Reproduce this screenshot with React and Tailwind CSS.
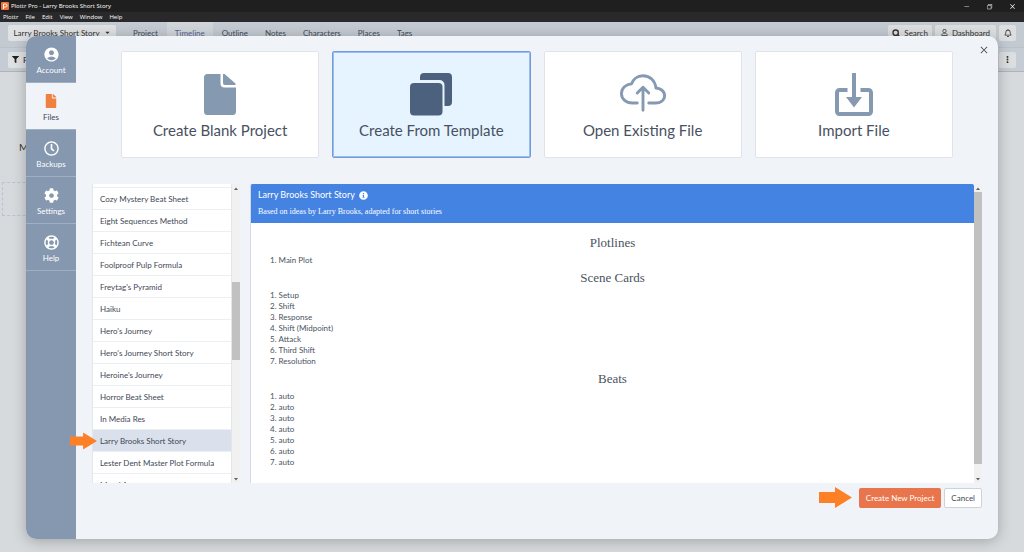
import React, { useState } from 'react';
import { FaFile, FaCog, FaRegClock, FaRegLifeRing, FaFilter, FaInfoCircle, FaRegBell, FaCaretDown, FaRegUser } from 'react-icons/fa';
import { MdAccountCircle } from 'react-icons/md';
import { IoCloudUploadOutline } from 'react-icons/io5';
import { FiSearch, FiMoreVertical } from 'react-icons/fi';
import { VscChromeMinimize, VscChromeRestore, VscChromeClose } from 'react-icons/vsc';

const MENUS = ['Plottr', 'File', 'Edit', 'View', 'Window', 'Help'];

const VIEWS = ['Project', 'Timeline', 'Outline', 'Notes', 'Characters', 'Places', 'Tags'];

const TABS = [
    { name: 'Account', icon: MdAccountCircle, size: 17 },
    { name: 'Files', icon: FaFile, size: 14 },
    { name: 'Backups', icon: FaRegClock, size: 15 },
    { name: 'Settings', icon: FaCog, size: 15 },
    { name: 'Help', icon: FaRegLifeRing, size: 15 },
];

const TEMPLATES = [
    'Cozy Mystery Beat Sheet',
    'Eight Sequences Method',
    'Fichtean Curve',
    'Foolproof Pulp Formula',
    "Freytag's Pyramid",
    'Haiku',
    "Hero's Journey",
    "Hero's Journey Short Story",
    "Heroine's Journey",
    'Horror Beat Sheet',
    'In Media Res',
    'Larry Brooks Short Story',
    'Lester Dent Master Plot Formula',
    'Moral Arc',
];

const SECTIONS = [
    { title: 'Plotlines', items: ['Main Plot'] },
    { title: 'Scene Cards', items: ['Setup', 'Shift', 'Response', 'Shift (Midpoint)', 'Attack', 'Third Shift', 'Resolution'] },
    { title: 'Beats', items: ['auto', 'auto', 'auto', 'auto', 'auto', 'auto', 'auto'] },
];

const BlankIcon = () => (
    <svg width="32" height="42" viewBox="0 0 32 42" fill="currentColor">
        <path d="M3.500 0H16.500v9.500a4 4 0 0 0 4 4H32V37.500a3.500 3.500 0 0 1-3.500 3.500h-25A3.500 3.500 0 0 1 0 37.500v-34A3.500 3.500 0 0 1 3.500 0z" />
        <path d="M19 0h1.500L31.500 9.500V11H21a2 2 0 0 1-2-2z" />
    </svg>
);

const TemplateIcon = () => (
    <svg width="42" height="43" viewBox="0 0 42 43" fill="currentColor">
        <path d="M10 7V4a4 4 0 0 1 4-4h24a4 4 0 0 1 4 4v25a4 4 0 0 1-4 4h-3.500V12a5 5 0 0 0-5-5z" />
        <rect x="0" y="10" width="32.500" height="32.500" rx="4" />
    </svg>
);

const ImportIcon = () => (
    <svg width="38" height="43" viewBox="0 0 38 43" fill="none" stroke="currentColor" strokeWidth="4">
        <path d="M12.500 17H4.500a2.500 2.500 0 0 0-2.500 2.500v19a2.500 2.500 0 0 0 2.500 2.500h29a2.500 2.500 0 0 0 2.500-2.500v-19a2.500 2.500 0 0 0-2.500-2.500h-8" />
        <path d="M19 0v25" />
        <path d="M11 24h16l-8 10.500z" fill="currentColor" stroke="none" />
    </svg>
);

const Arrow = ({ className }) => (
    <svg className={className} viewBox="0 0 33 21" fill="#fd7f26" aria-hidden="true">
        <path d="M0 5h16V0l17 10.500L16 21v-5H0z" />
    </svg>
);

const ACTIONS = [
    { label: 'Create Blank Project', icon: <BlankIcon /> },
    { label: 'Create From Template', icon: <TemplateIcon /> },
    { label: 'Open Existing File', icon: <IoCloudUploadOutline size={46} /> },
    { label: 'Import File', icon: <ImportIcon /> },
];

const Scrollbar = ({ before, thumb, after }) => (
    <div className="flex w-2 shrink-0 flex-col items-center bg-[#f1f1f1]" aria-hidden="true">
        <svg className="h-2 w-1 shrink-0" viewBox="0 0 4 8" fill="#606060"><path d="M0 6l2-2.500L4 6z" /></svg>
        <div className="flex w-full flex-1 flex-col">
            <div style={{ flexGrow: before }} />
            <div className="bg-[#c1c1c1]" style={{ flexGrow: thumb }} />
            <div style={{ flexGrow: after }} />
        </div>
        <svg className="h-2 w-1 shrink-0" viewBox="0 0 4 8" fill="#606060"><path d="M0 3l2 2.500L4 3z" /></svg>
    </div>
);

const TitleBar = () => (
    <header className="font-['Open_Sans',sans-serif] text-[6px] text-white">
        <div className="flex h-3 items-center bg-[#1f1f1f] pl-px leading-3">
            <svg className="mr-0.5 h-2 w-2" viewBox="0 0 8 8">
                <rect width="8" height="8" rx="1" fill="#f0703c" />
                <path d="M2.500 7V2h2a1.500 1.500 0 0 1 0 3h-2" fill="none" stroke="#fff" strokeWidth="1" />
            </svg>
            <span>Plottr Pro - Larry Brooks Short Story</span>
            <div className="ml-auto flex items-center gap-4 pr-2">
                <button type="button" aria-label="Minimize"><VscChromeMinimize size={7} /></button>
                <button type="button" aria-label="Restore"><VscChromeRestore size={7} /></button>
                <button type="button" aria-label="Close window"><VscChromeClose size={7} /></button>
            </div>
        </div>
        <nav className="flex h-[10px] items-center gap-[7px] bg-[#29292b] pl-[3px] leading-[10px]">
            {MENUS.map((menu) => <button key={menu} type="button">{menu}</button>)}
        </nav>
    </header>
);

const Workspace = () => (
    <>
        <div className="flex h-[26px] items-center border-b border-[#bac2cb] bg-[#c3cad2] px-2 pb-1 text-[8px] text-[#444c58]">
            <button type="button" className="mr-[9px] flex h-4 w-[108px] items-center justify-center gap-1 rounded-xs bg-[#dfe1e3] text-[#333]">
                Larry Brooks Short Story <FaCaretDown size={7} />
            </button>
            <nav className="flex h-full gap-px">
                {VIEWS.map((view) => (
                    <button key={view} type="button" className={view === 'Timeline' ? 'bg-[#d0d5da] px-2 text-[#5a6390]' : 'px-2'}>
                        {view}
                    </button>
                ))}
            </nav>
            <div className="ml-auto flex gap-[3px] text-[#333]">
                <button type="button" className="flex h-4 items-center gap-1 rounded-xs bg-[#dcdee0] px-1"><FiSearch size={8} strokeWidth={4} /> Search</button>
                <button type="button" className="flex h-4 items-center gap-1 rounded-xs bg-[#dcdee0] px-1.5"><FaRegUser size={7} /> Dashboard</button>
                <button type="button" aria-label="Notifications" className="flex h-4 w-[17px] items-center justify-center rounded-xs bg-[#dcdee0]"><FaRegBell size={8} /></button>
            </div>
        </div>
        <div className="flex h-6 items-center justify-between border-b border-[#aeb4bb] bg-[#c6ccd3] px-2 text-[8px] text-[#222]">
            <button type="button" className="flex h-4 items-center gap-1 rounded-xs bg-[#dfe1e3] px-1"><FaFilter size={7} /> Filter</button>
            <button type="button" aria-label="More" className="flex h-4 w-[17px] items-center justify-center rounded-xs bg-[#dcdee0]"><FiMoreVertical size={9} strokeWidth={3} /></button>
        </div>
        <main className="flex-1 bg-[#d7dadd] text-[10px] text-[#333]">
            <div className="mt-[66px] pl-[19px] leading-[18px]">Main Plot</div>
            <div className="mt-[26px] ml-0.5 h-[34px] w-20 border border-dashed border-[#b4c4d2]" />
        </main>
    </>
);

const TemplateDetails = ({ name }) => (
    <div className="flex min-w-0 flex-1">
        <section className="min-w-0 flex-1 overflow-hidden rounded-t-xs border-l border-[#d2dbe5] bg-white">
            <div className="h-[39px] bg-[#4583e3] px-[7px] pt-1 text-white">
                <h2 className="flex items-center gap-1 text-[9px] leading-[14px]">{name} <FaInfoCircle size={9} /></h2>
                <p className="mt-1 font-['Liberation_Serif',serif] text-[8px] leading-3">Based on ideas by Larry Brooks, adapted for short stories</p>
            </div>
            <div className="pt-3 text-[#4a5361]">
                {SECTIONS.map(({ title, items }) => (
                    <div key={title} className="mb-1">
                        <h3 className="text-center font-['Liberation_Serif',serif] text-[13px] leading-4">{title}</h3>
                        <ol className="mt-1 list-inside list-decimal pl-[19px] text-[8px] leading-[11px]">
                            {items.map((item, i) => <li key={i}>{item}</li>)}
                        </ol>
                    </div>
                ))}
            </div>
        </section>
        <Scrollbar before={0} thumb={272} after={11} />
    </div>
);

export default function App() {
    const [tab, setTab] = useState('Files');
    const [action, setAction] = useState('Create From Template');
    const [template, setTemplate] = useState('Larry Brooks Short Story');

    return (
        <div className="relative flex h-screen flex-col overflow-hidden font-[Lato,sans-serif]">
            <TitleBar />
            <Workspace />

            <div role="dialog" aria-label="Files" className="absolute inset-x-[26px] top-[36px] bottom-[13px] flex overflow-hidden rounded-[10px] bg-[#f0f4f8] shadow-[0_2px_14px_rgba(0,0,0,0.25)]">
                <aside className="w-[50px] shrink-0 bg-[#8598b0]">
                    {TABS.map(({ name, icon: Icon, size }) => (
                        <button
                            key={name}
                            type="button"
                            onClick={() => setTab(name)}
                            className={`flex h-[47px] w-full flex-col items-center border-b border-[#9fb0c4] pt-2 text-[8px] leading-3 ${tab === name ? 'bg-[#f0f4f8] text-[#3c4654]' : 'text-white'}`}
                        >
                            <span className={`flex h-5 items-center ${tab === name ? 'text-[#f0803f]' : ''}`}><Icon size={size} /></span>
                            {name}
                        </button>
                    ))}
                </aside>

                <div className="flex min-w-0 flex-1 flex-col pt-[15px] pb-[31px]">
                    <button type="button" aria-label="Close" className="absolute top-[9px] right-[9px] text-[#3c4654]"><VscChromeClose size={10} /></button>

                    <div className="grid grid-cols-4 gap-[13px] px-[45px]">
                        {ACTIONS.map(({ label, icon }) => (
                            <button
                                key={label}
                                type="button"
                                onClick={() => setAction(label)}
                                className={`flex h-[107px] flex-col items-center rounded-xs border pt-4 text-[15px] leading-5 ${action === label ? 'border-[#6f9be0] bg-[#e6f4ff] text-[#4c617d] inset-ring inset-ring-[#9dbdec]' : 'border-[#dfe4ea] bg-white text-[#8599b1]'}`}
                            >
                                <span className="flex h-12 items-end justify-center">{icon}</span>
                                <span className="mt-1 text-[#48515f]">{label}</span>
                            </button>
                        ))}
                    </div>

                    <div className="relative mt-[26px] flex min-h-0 flex-1 gap-[10px] pr-4 pl-4">
                        <div className="flex w-[148px] shrink-0">
                            <ul className="flex-1 overflow-hidden border-x border-[#e3e7eb] bg-white pt-[3px] text-[8px] text-[#3f4855]">
                                {TEMPLATES.map((name) => (
                                    <li key={name} className="border-t border-[#eceff2]">
                                        <button
                                            type="button"
                                            onClick={() => setTemplate(name)}
                                            className={`h-[21px] w-full px-[7px] text-left whitespace-nowrap ${template === name ? 'bg-[#dae1ec]' : ''}`}
                                        >
                                            {name}
                                        </button>
                                    </li>
                                ))}
                            </ul>
                            <Scrollbar before={90} thumb={78} after={115} />
                        </div>
                        <Arrow className="absolute bottom-8 -left-1.5 h-5 w-[27px]" />
                        <TemplateDetails name={template} />
                    </div>

                    <div className="mt-1 flex items-center justify-end gap-[3px] pr-4 text-[8px]">
                        <Arrow className="mr-1 h-[21px] w-[33px]" />
                        <button type="button" className="h-5 rounded-xs bg-[#e8754b] px-[7px] text-white">Create New Project</button>
                        <button type="button" className="h-5 rounded-xs border border-[#cdd3da] bg-white px-1.5 text-[#3f4855]">Cancel</button>
                    </div>
                </div>
            </div>
        </div>
    );
}
